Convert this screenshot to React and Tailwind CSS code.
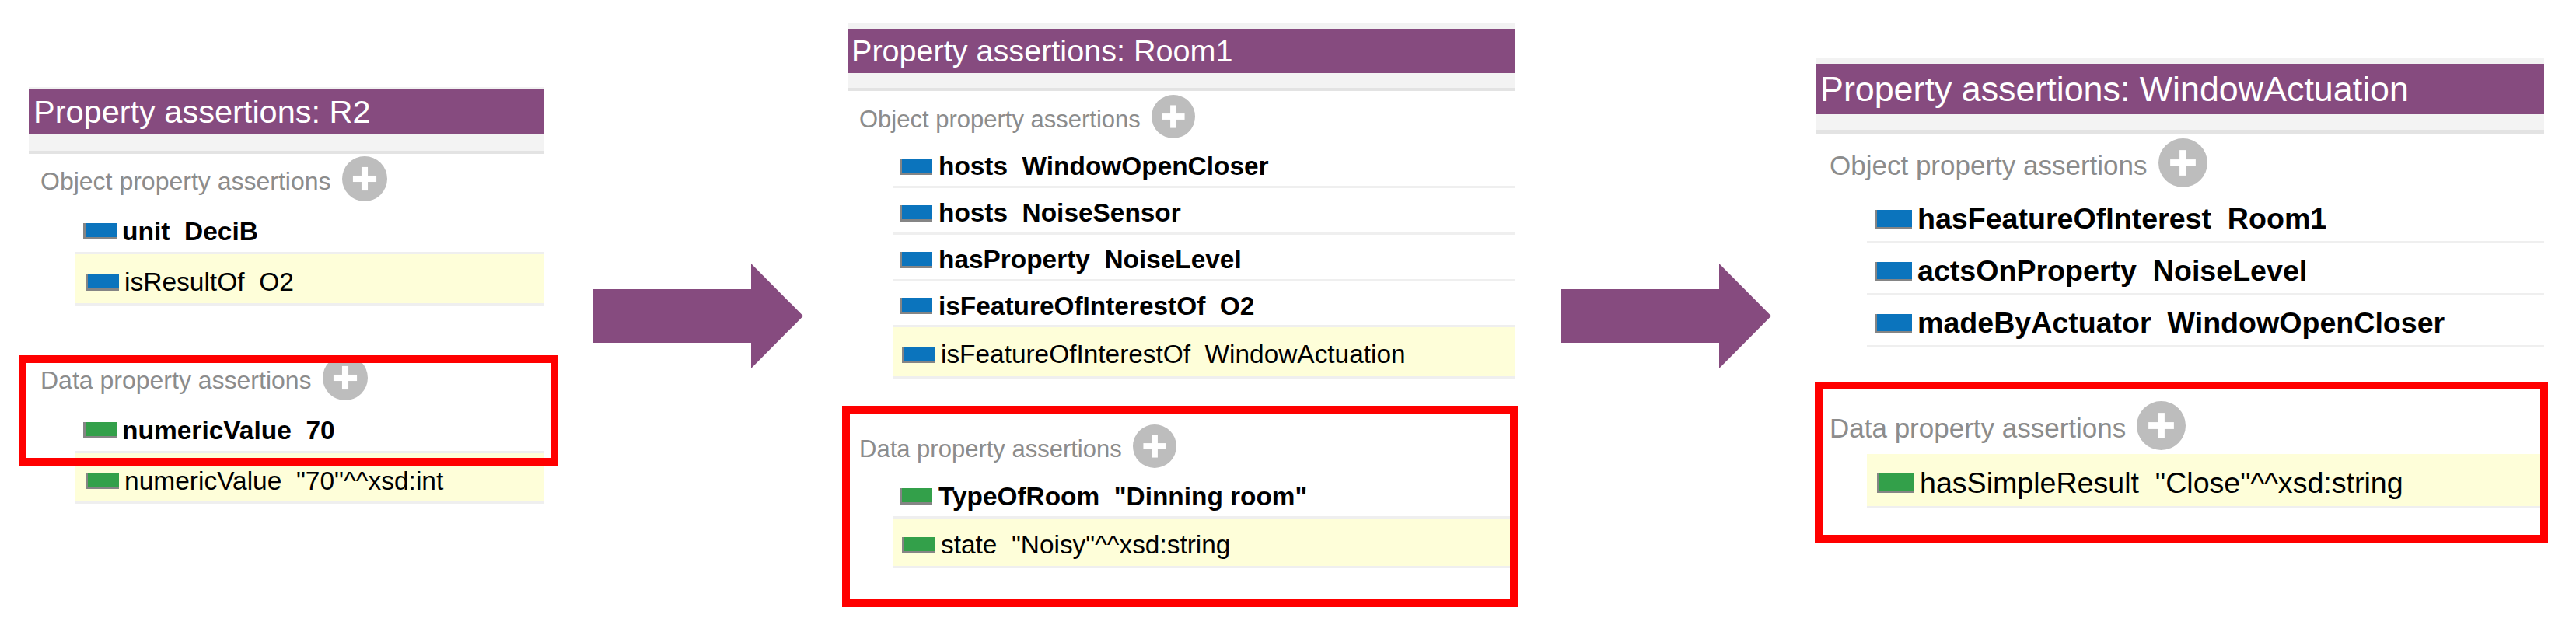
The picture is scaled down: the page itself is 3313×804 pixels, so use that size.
import React from "react";

const FONT = "font-['Liberation_Sans',Arial,sans-serif]";

function Plus({ cls }) {
  return (
    <svg viewBox="0 0 100 100" className={cls}>
      <circle cx="50" cy="50" r="50" fill="#bdbdbd" />
      <rect x="24" y="43" width="52" height="14" fill="#ffffff" />
      <rect x="43" y="24" width="14" height="52" fill="#ffffff" />
    </svg>
  );
}

function Arrow() {
  return (
    <svg viewBox="0 0 270 135" className="w-[270px] h-[135px] shrink-0 mt-[339px]">
      <path d="M0 33 H203 V0 L270 67.5 L203 135 V102 H0 Z" fill="#864b7f" />
    </svg>
  );
}

function Row({ row, p }) {
  const bg = row.yellow ? "bg-[#fefed9]" : "bg-white";
  const pad = row.bold ? p.rowPadBold : p.rowPadReg;
  const rect = row.kind === "data" ? "bg-[#33a04a]" : "bg-[#0b74bd]";
  return (
    <div className={`flex items-center border-b-[3px] border-[#efefef] ${bg} ${pad} ${row.h}`}>
      <div className={`shrink-0 border-l-[3px] border-b-[3px] border-[#858585] ${rect} ${p.rectCls}`} />
      <span
        className={`whitespace-pre leading-none text-black ${p.textCls} ${
          row.bold ? "font-bold" : "font-normal"
        }`}
      >
        {row.text}
      </span>
    </div>
  );
}

function Panel({ p }) {
  return (
    <div className={`relative shrink-0 ${FONT} ${p.wrapCls}`}>
      <div className={`bg-[#f2f2f2] ${p.stripCls}`} />
      <div className={`flex items-center bg-[#864b7f] text-white leading-none ${p.headerCls}`}>
        <span>{p.title}</span>
      </div>
      <div className={`bg-[#f3f3f3] border-b-[#e3e3e3] ${p.bandCls}`} />
      <div className={`flex items-center ${p.sectionCls}`}>
        <span className={`leading-none text-[#8c8c8c] ${p.labelCls}`}>Object property assertions</span>
        <Plus cls={`shrink-0 ml-[14px] ${p.circleCls}`} />
      </div>
      <div className={p.rowsWrapCls}>
        {p.objRows.map((r, i) => (
          <Row key={i} row={{ ...r, kind: "obj" }} p={p} />
        ))}
      </div>
      <div className={`flex items-center ${p.dataSectionCls}`}>
        <span className={`leading-none text-[#8c8c8c] ${p.labelCls}`}>Data property assertions</span>
        <Plus cls={`shrink-0 ml-[14px] ${p.circleCls}`} />
      </div>
      <div className={p.rowsWrapCls}>
        {p.dataRows.map((r, i) => (
          <Row key={i} row={{ ...r, kind: "data" }} p={p} />
        ))}
      </div>
      <div className={`absolute border-[10px] border-[#ff0000] ${p.redCls}`} />
    </div>
  );
}

const P1 = {
  title: "Property assertions: R2",
  wrapCls: "w-[663px] mt-[112px]",
  stripCls: "h-[3px]",
  headerCls: "h-[58px] text-[41.5px] pl-[6px]",
  bandCls: "h-[25px] border-b-[4px]",
  sectionCls: "h-[64px] pl-[15px]",
  labelCls: "text-[32px] pt-[6px]",
  circleCls: "w-[58px] h-[58px]",
  rowsWrapCls: "ml-[60px]",
  rowPadBold: "pl-[10px] pt-[9px]",
  rowPadReg: "pl-[13px] pt-[9px]",
  rectCls: "w-[43px] h-[21px] mr-[7px]",
  textCls: "text-[33.5px]",
  objRows: [
    { text: "unit  DeciB", bold: true, h: "h-[65px]" },
    { text: "isResultOf  O2", bold: false, yellow: true, h: "h-[66px]" },
  ],
  dataSectionCls: "h-[64px] pl-[15px] mt-[61px]",
  dataRows: [
    { text: "numericValue  70", bold: true, h: "h-[65px]" },
    { text: "numericValue  \"70\"^^xsd:int", bold: false, yellow: true, h: "h-[65px]" },
  ],
  redCls: "top-[345px] -left-[13px] w-[694px] h-[142px]",
};

const P2 = {
  title: "Property assertions: Room1",
  wrapCls: "w-[858px] mt-[30px]",
  stripCls: "h-[7px]",
  headerCls: "h-[57px] text-[39.6px] pl-[4px]",
  bandCls: "h-[23px] border-b-[4px]",
  sectionCls: "h-[65px] pl-[14px]",
  labelCls: "text-[31px] pt-[7px]",
  circleCls: "w-[56px] h-[56px]",
  rowsWrapCls: "ml-[57px]",
  rowPadBold: "pl-[9px] pt-[7px]",
  rowPadReg: "pl-[12px] pt-[7px]",
  rectCls: "w-[42px] h-[21px] mr-[8px]",
  textCls: "text-[33.4px]",
  objRows: [
    { text: "hosts  WindowOpenCloser", bold: true, h: "h-[60px]" },
    { text: "hosts  NoiseSensor", bold: true, h: "h-[60px]" },
    { text: "hasProperty  NoiseLevel", bold: true, h: "h-[60px]" },
    { text: "isFeatureOfInterestOf  O2", bold: true, h: "h-[59px]" },
    { text: "isFeatureOfInterestOf  WindowActuation", bold: false, yellow: true, h: "h-[66px]" },
  ],
  dataSectionCls: "h-[64px] pl-[14px] mt-[55px]",
  dataRows: [
    { text: "TypeOfRoom  \"Dinning room\"", bold: true, h: "h-[61px]" },
    { text: "state  \"Noisy\"^^xsd:string", bold: false, yellow: true, h: "h-[64px]" },
  ],
  redCls: "top-[492px] -left-[8px] w-[869px] h-[259px]",
};

const P3 = {
  title: "Property assertions: WindowActuation",
  wrapCls: "w-[937px] mt-[74px]",
  stripCls: "h-[8px]",
  headerCls: "h-[65px] text-[44.8px] pl-[6px]",
  bandCls: "h-[25px] border-b-[5px]",
  sectionCls: "h-[74px] pl-[18px]",
  labelCls: "text-[35px] pt-[6px]",
  circleCls: "w-[63px] h-[63px]",
  rowsWrapCls: "ml-[66px]",
  rowPadBold: "pl-[10px] pt-[8px]",
  rowPadReg: "pl-[13px] pt-[8px]",
  rectCls: "w-[48px] h-[25px] mr-[7px]",
  textCls: "text-[37.6px]",
  objRows: [
    { text: "hasFeatureOfInterest  Room1", bold: true, h: "h-[67px]" },
    { text: "actsOnProperty  NoiseLevel", bold: true, h: "h-[67px]" },
    { text: "madeByActuator  WindowOpenCloser", bold: true, h: "h-[67px]" },
  ],
  dataSectionCls: "h-[74px] pl-[18px] mt-[63px]",
  dataRows: [
    { text: "hasSimpleResult  \"Close\"^^xsd:string", bold: false, yellow: true, h: "h-[70px]" },
  ],
  redCls: "top-[417px] -left-[1px] w-[943px] h-[207px]",
};

export default function App() {
  return (
    <div className="w-[3313px] h-[804px] bg-white flex items-start pl-[37px] overflow-hidden">
      <Panel p={P1} />
      <div className="ml-[63px]">
        <Arrow />
      </div>
      <div className="ml-[58px]">
        <Panel p={P2} />
      </div>
      <div className="ml-[59px]">
        <Arrow />
      </div>
      <div className="ml-[57px]">
        <Panel p={P3} />
      </div>
    </div>
  );
}
